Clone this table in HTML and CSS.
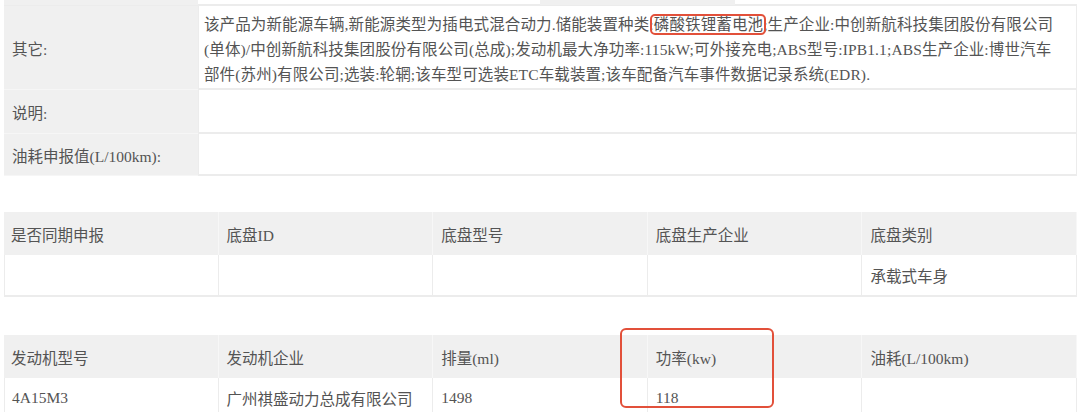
FILE: index.html
```html
<!DOCTYPE html>
<html lang="zh-CN">
<head>
<meta charset="utf-8">
<title>车辆参数</title>
<link rel="stylesheet" href="styles.css">
</head>
<body>
<div class="page">
  <div class="prev-row">
    <div class="cell label"></div>
    <div class="cell value"></div>
    <div class="cell label"></div>
    <div class="cell value"></div>
  </div>

  <div class="info-table">
    <div class="cell label row-tall">其它:</div>
    <div class="cell value row-tall text-block">该产品为新能源车辆,新能源类型为插电式混合动力.储能装置种类:<span class="mark">磷酸铁锂蓄电池</span>;生产企业:中创新航科技集团股份有限公司<br>(单体)/中创新航科技集团股份有限公司(总成);发动机最大净功率:115kW;可外接充电;ABS型号:IPB1.1;ABS生产企业:博世汽车<br>部件(苏州)有限公司;选装:轮辋;该车型可选装ETC车载装置;该车配备汽车事件数据记录系统(EDR).</div>
    <div class="cell label row-mid">说明:</div>
    <div class="cell value row-mid"></div>
    <div class="cell label row-low">油耗申报值(L/100km):</div>
    <div class="cell value row-low"></div>
  </div>

  <div class="grid-table chassis">
    <div class="cell head">是否同期申报</div>
    <div class="cell head">底盘ID</div>
    <div class="cell head">底盘型号</div>
    <div class="cell head">底盘生产企业</div>
    <div class="cell head">底盘类别</div>
    <div class="cell data"></div>
    <div class="cell data"></div>
    <div class="cell data"></div>
    <div class="cell data"></div>
    <div class="cell data">承载式车身</div>
  </div>

  <div class="grid-table engine">
    <div class="cell head">发动机型号</div>
    <div class="cell head">发动机企业</div>
    <div class="cell head">排量(ml)</div>
    <div class="cell head">功率(kw)</div>
    <div class="cell head">油耗(L/100km)</div>
    <div class="cell data">4A15M3</div>
    <div class="cell data">广州祺盛动力总成有限公司</div>
    <div class="cell data">1498</div>
    <div class="cell data">118</div>
    <div class="cell data"></div>
    <div class="power-box"></div>
  </div>
</div>
</body>
</html>
```

FILE: styles.css
```css
html, body {
  margin: 0;
  padding: 0;
  background: #ffffff;
}

body {
  font-family: "Liberation Serif", "Noto Sans CJK SC", serif;
  font-size: 15.5px;
  color: #545454;
  overflow: hidden;
  height: 412px;
}

.page {
  padding: 0 3px 0 4px;
}

.cell {
  box-sizing: border-box;
  display: flex;
  align-items: center;
}

.prev-row {
  display: grid;
  grid-template-columns: 194px 342px 195px 1fr;
  height: 5px;
}

.prev-row .label {
  background: #f0f0f0;
}

.prev-row .value {
  background: #ffffff;
  border-bottom: 1px solid #ececec;
}

.info-table {
  display: grid;
  grid-template-columns: 194px 1fr;
  grid-template-rows: 84px 44px 42px;
  border-top: 1px solid #ececec;
}

.info-table .label {
  background: #f0f0f0;
  padding-left: 8px;
  border-bottom: 1px solid #f6f6f6;
}

.info-table .value {
  background: #ffffff;
  border-bottom: 2px solid #ececec;
  border-right: 1px solid #ececec;
  border-left: 1px solid #ececec;
}

.text-block {
  display: block;
  padding: 6px 4px 0 5px;
  line-height: 25px;
  letter-spacing: 0.12px;
  white-space: nowrap;
}

.mark {
  position: relative;
}

.mark::after {
  content: "";
  position: absolute;
  left: -4px;
  right: -3px;
  top: -2px;
  bottom: -2px;
  border: 2px solid #e2503a;
  border-radius: 5px;
  pointer-events: none;
}

.grid-table {
  position: relative;
  display: grid;
  grid-template-columns: repeat(5, 1fr);
  grid-template-rows: 43px 42px;
}

.chassis {
  margin-top: 36px;
}

.engine {
  margin-top: 38px;
}

.grid-table .head {
  background: #f0f0f0;
  padding-left: 8px;
  border-right: 1px solid #f7f7f7;
}

.grid-table .head:first-child {
  padding-left: 7px;
}

.grid-table .data {
  background: #ffffff;
  padding-left: 8px;
  border-right: 1px solid #ececec;
  border-bottom: 2px solid #ececec;
}

.grid-table .data:nth-child(6) {
  padding-left: 7px;
  border-left: 1px solid #ececec;
}

.power-box {
  position: absolute;
  left: 616px;
  top: -7px;
  width: 154px;
  height: 80px;
  box-sizing: border-box;
  border: 2.5px solid #e2503a;
  border-radius: 6px;
}
```
